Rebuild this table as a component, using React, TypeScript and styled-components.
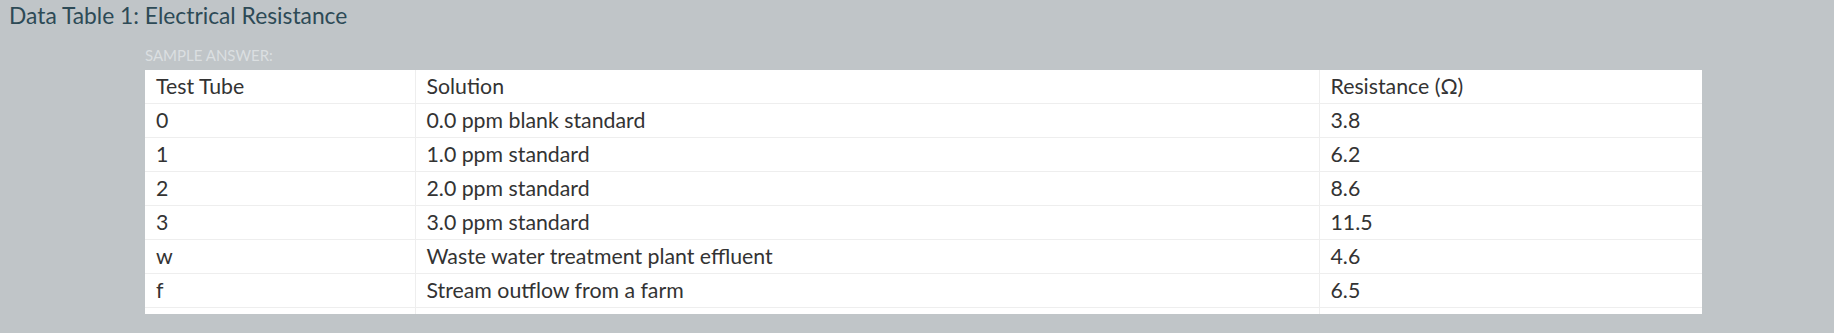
import React from 'react';
import styled, { createGlobalStyle } from 'styled-components';

const GlobalStyle = createGlobalStyle`
    html, body {
        margin: 0;
        padding: 0;
        background: #c0c5c8;
    }
    body {
        font-family: Lato, "Open Sans", sans-serif;
    }
`;

const Page = styled.div`
    display: flex;
    flex-direction: column;
    width: 1834px;
    height: 333px;
    background: #c0c5c8;
    padding: 0 0 0 9px;
    box-sizing: border-box;
`;

const Title = styled.h3`
    margin: 0;
    padding-top: 1px;
    font-size: 22.8px;
    font-weight: 400;
    line-height: 28px;
    color: #2d4a56;
`;

const AnswerBlock = styled.div`
    display: flex;
    flex-direction: column;
    margin: 16px 0 0 136px;
`;

const Label = styled.div`
    font-size: 15px;
    font-weight: 400;
    line-height: 20px;
    text-transform: uppercase;
    color: #dbdfe1;
    margin-bottom: 5px;
`;

const Table = styled.table`
    border-collapse: collapse;
    width: 1557px;
    background: #fff;
    table-layout: fixed;
`;

const Col = styled.col<{ $w: number }>`
    width: ${({ $w }) => `${$w}px`};
`;

const Cell = styled.td`
    border: 1px solid #eeeeee;
    padding: 3px 11px;
    font-size: 21.3px;
    line-height: 27px;
    color: #333;
    text-align: left;
    vertical-align: top;
    white-space: nowrap;
    &:first-child { border-left: none; }
    &:last-child { border-right: none; }
`;

const HeadRow = styled.tr`
    & > td { border-top: none; }
`;

const SpacerRow = styled.tr`
    & > td {
        padding: 0;
        height: 6px;
        border-bottom: none;
    }
`;

const rows = [
    ['0', '0.0 ppm blank standard', '3.8'],
    ['1', '1.0 ppm standard', '6.2'],
    ['2', '2.0 ppm standard', '8.6'],
    ['3', '3.0 ppm standard', '11.5'],
    ['w', 'Waste water treatment plant effluent', '4.6'],
    ['f', 'Stream outflow from a farm', '6.5'],
];

export default function App() {
    return (
        <>
            <GlobalStyle />
            <Page>
                <Title>Data Table 1: Electrical Resistance</Title>
                <AnswerBlock>
                    <Label>Sample Answer:</Label>
                    <Table>
                        <colgroup>
                            <Col $w={270} />
                            <Col $w={904} />
                            <Col $w={383} />
                        </colgroup>
                        <tbody>
                            <HeadRow>
                                <Cell>Test Tube</Cell>
                                <Cell>Solution</Cell>
                                <Cell>Resistance (Ω)</Cell>
                            </HeadRow>
                            {rows.map(r => (
                                <tr key={r[0]}>
                                    <Cell>{r[0]}</Cell>
                                    <Cell>{r[1]}</Cell>
                                    <Cell>{r[2]}</Cell>
                                </tr>
                            ))}
                            <SpacerRow>
                                <Cell />
                                <Cell />
                                <Cell />
                            </SpacerRow>
                        </tbody>
                    </Table>
                </AnswerBlock>
            </Page>
        </>
    );
}
